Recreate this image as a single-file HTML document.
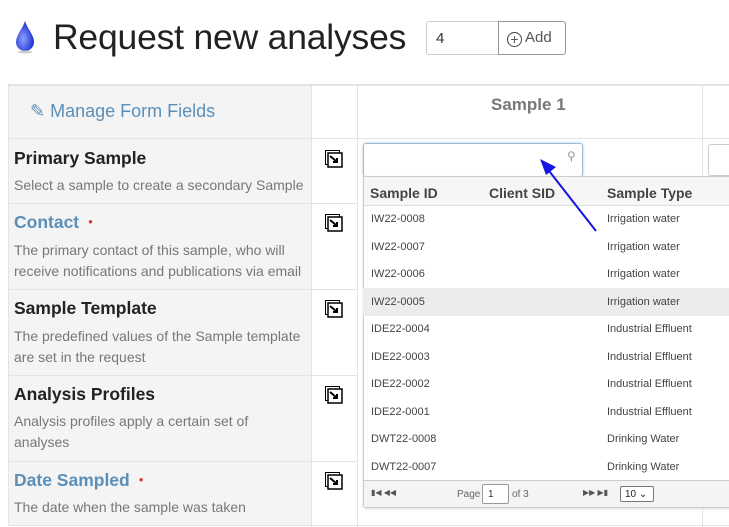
<!DOCTYPE html>
<html><head><meta charset="utf-8"><style>
*{box-sizing:border-box}
body{margin:0;width:729px;height:527px;overflow:hidden;background:#fff;font-family:"Liberation Sans",sans-serif;position:relative;color:#333}
.abs{position:absolute}
h1{position:absolute;left:53px;top:17px;margin:0;font-weight:normal;font-size:35.5px;color:#222;letter-spacing:-0.2px}
.cell{position:absolute;border-right:1px solid #e3e3e3;border-bottom:1px solid #e3e3e3}
.lab{background:#f4f4f4}
.t{position:absolute;left:14px;font-weight:bold;font-size:17.5px;color:#222}
.t.b{color:#5b8fb8}
.d{position:absolute;left:14px;font-size:14px;color:#777;line-height:21px}
.dot{color:#d33;font-size:8px;margin-left:9px;vertical-align:4px}
.ic{position:absolute;left:325px;width:18px;height:18px}
.r{position:absolute;left:363px;width:366px;height:27.5px;font-size:11px;color:#444}
.r span{position:absolute;top:8px}
</style></head><body>
<svg class="abs" style="left:12px;top:20px" width="26" height="34" viewBox="0 0 26 34"><defs><radialGradient id="g" cx="0.4" cy="0.6" r="0.6"><stop offset="0" stop-color="#8aa0ff"/><stop offset="1" stop-color="#1a2fd0"/></radialGradient></defs><path d="M13 1 C11 8 4 15 4 22 A9 9 0 0 0 22 22 C22 15 15 8 13 1Z" fill="url(#g)"/><ellipse cx="13" cy="32" rx="7" ry="1.5" fill="#ccc"/></svg>
<h1>Request new analyses</h1>
<div class="abs" style="left:426px;top:21px;width:140px;height:34px;border:1px solid #ccc;border-radius:3px"></div>
<div class="abs" style="left:436px;top:30px;font-size:15px;color:#333">4</div>
<div class="abs" style="left:498px;top:21px;width:68px;height:34px;border:1px solid #999;border-radius:0 3px 3px 0;font-size:15px;color:#555;padding:7px 0 0 8px"><span style="display:inline-block;width:15px;height:15px;border:1px solid #444;border-radius:50%;text-align:center;line-height:13px;font-size:14px;vertical-align:-2px;margin-right:3px">+</span>Add</div>

<div class="abs" style="left:8px;top:84px;width:721px;border-top:2px solid #e3e3e3"></div>
<div class="cell lab" style="left:8px;top:86px;width:304px;height:53px;border-left:1px solid #e3e3e3"></div>
<div class="abs" style="left:30px;top:101px;font-size:18px;color:#5b8fb8">✎ Manage Form Fields</div>
<div class="cell" style="left:312px;top:86px;width:46px;height:53px"></div>
<div class="cell" style="left:358px;top:86px;width:345px;height:53px"></div>
<div class="abs" style="left:491px;top:95px;font-size:17px;font-weight:bold;color:#777">Sample 1</div>

<div class="cell lab" style="left:8px;top:139px;width:304px;height:65px;border-left:1px solid #e3e3e3"></div>
<div class="cell lab" style="left:8px;top:204px;width:304px;height:86px;border-left:1px solid #e3e3e3"></div>
<div class="cell lab" style="left:8px;top:290px;width:304px;height:86px;border-left:1px solid #e3e3e3"></div>
<div class="cell lab" style="left:8px;top:376px;width:304px;height:86px;border-left:1px solid #e3e3e3"></div>
<div class="cell lab" style="left:8px;top:462px;width:304px;height:64px;border-left:1px solid #e3e3e3"></div>
<div class="abs" style="left:311px;top:139px;width:1px;height:388px;background:#e3e3e3"></div>
<div class="abs" style="left:357px;top:139px;width:1px;height:388px;background:#e3e3e3"></div>
<div class="abs" style="left:702px;top:86px;width:1px;height:441px;background:#e3e3e3"></div>
<div class="abs" style="left:312px;top:203px;width:46px;height:1px;background:#e3e3e3"></div>
<div class="abs" style="left:312px;top:289px;width:46px;height:1px;background:#e3e3e3"></div>
<div class="abs" style="left:312px;top:375px;width:46px;height:1px;background:#e3e3e3"></div>
<div class="abs" style="left:312px;top:461px;width:46px;height:1px;background:#e3e3e3"></div>
<div class="abs" style="left:312px;top:525px;width:417px;height:1px;background:#e3e3e3"></div>
<div class="abs" style="left:358px;top:138px;width:371px;height:1px;background:#e3e3e3"></div>

<div class="t" style="top:148px">Primary Sample</div>
<div class="d" style="top:175px">Select a sample to create a secondary Sample</div>
<div class="t b" style="top:212px">Contact<span class="dot">●</span></div>
<div class="d" style="top:240px">The primary contact of this sample, who will<br>receive notifications and publications via email</div>
<div class="t" style="top:298px">Sample Template</div>
<div class="d" style="top:326px">The predefined values of the Sample template<br>are set in the request</div>
<div class="t" style="top:384px">Analysis Profiles</div>
<div class="d" style="top:411px">Analysis profiles apply a certain set of<br>analyses</div>
<div class="t b" style="top:470px">Date Sampled<span class="dot">●</span></div>
<div class="d" style="top:497px">The date when the sample was taken</div>

<svg width="0" height="0" style="position:absolute"><defs><g id="ic"><rect x="0.5" y="0.5" width="14" height="14" fill="none" stroke="#000"/><rect x="3" y="3" width="14" height="14" fill="#fff" stroke="#000" stroke-width="1.5"/><path d="M5 6 L11 11 M8 12 L12 12 L12 8" stroke="#000" stroke-width="2" fill="none"/></g></defs></svg>
<svg class="ic" style="top:150px" viewBox="0 0 18 18"><use href="#ic"/></svg>
<svg class="ic" style="top:214px" viewBox="0 0 18 18"><use href="#ic"/></svg>
<svg class="ic" style="top:300px" viewBox="0 0 18 18"><use href="#ic"/></svg>
<svg class="ic" style="top:386px" viewBox="0 0 18 18"><use href="#ic"/></svg>
<svg class="ic" style="top:472px" viewBox="0 0 18 18"><use href="#ic"/></svg>

<div class="abs" style="left:363px;top:143px;width:220px;height:34px;border:1px solid #9dbad3;border-radius:3px;box-shadow:0 0 3px #b7cde0"></div>
<div class="abs" style="left:567px;top:149px;font-size:12px;color:#999">⚲</div>
<div class="abs" style="left:708px;top:144px;width:30px;height:32px;border:1px solid #ccc;border-radius:3px"></div>

<div class="abs" style="left:363px;top:176px;width:370px;height:332px;border:1px solid #ccc;border-radius:0 0 3px 3px;background:#fff;box-shadow:0 1px 2px #ddd"></div>
<div class="abs" style="left:364px;top:177px;width:366px;height:29px;background:#f6f6f6;border-bottom:1px solid #ddd;font-size:14px;font-weight:bold;color:#444">
<span class="abs" style="left:6px;top:8px">Sample ID</span><span class="abs" style="left:125px;top:8px">Client SID</span><span class="abs" style="left:243px;top:8px">Sample Type</span></div>
<div class="r" style="top:205px"><span style="left:8px">IW22-0008</span><span style="left:244px">Irrigation water</span></div>
<div class="r" style="top:233px"><span style="left:8px">IW22-0007</span><span style="left:244px">Irrigation water</span></div>
<div class="r" style="top:260px"><span style="left:8px">IW22-0006</span><span style="left:244px">Irrigation water</span></div>
<div class="r" style="top:288px;background:#ececec"><span style="left:8px">IW22-0005</span><span style="left:244px">Irrigation water</span></div>
<div class="r" style="top:315px"><span style="left:8px">IDE22-0004</span><span style="left:244px">Industrial Effluent</span></div>
<div class="r" style="top:343px"><span style="left:8px">IDE22-0003</span><span style="left:244px">Industrial Effluent</span></div>
<div class="r" style="top:370px"><span style="left:8px">IDE22-0002</span><span style="left:244px">Industrial Effluent</span></div>
<div class="r" style="top:398px"><span style="left:8px">IDE22-0001</span><span style="left:244px">Industrial Effluent</span></div>
<div class="r" style="top:425px"><span style="left:8px">DWT22-0008</span><span style="left:244px">Drinking Water</span></div>
<div class="r" style="top:453px"><span style="left:8px">DWT22-0007</span><span style="left:244px">Drinking Water</span></div>
<div class="abs" style="left:364px;top:480px;width:366px;height:27px;background:#f4f4f4;border-top:1px solid #ccc;font-size:10px;color:#666">
<span class="abs" style="left:7px;top:7px;font-size:8px;color:#555">▮◀ ◀◀</span>
<span class="abs" style="left:93px;top:8px">Page</span>
<span class="abs" style="left:118px;top:3px;width:27px;height:20px;border:1px solid #999;border-radius:2px;background:#fff;padding:4px 0 0 5px;color:#333">1</span>
<span class="abs" style="left:148px;top:8px">of 3</span>
<span class="abs" style="left:219px;top:7px;font-size:8px;color:#555">▶▶ ▶▮</span>
<span class="abs" style="left:256px;top:5px;width:34px;height:16px;border:1px solid #777;border-radius:2px;background:#fff;padding:2px 0 0 4px;color:#222">10 ⌄</span>
</div>

<svg class="abs" style="left:530px;top:155px" width="70" height="80"><path d="M66 76 L16 12" stroke="#1515e0" stroke-width="2"/><path d="M10 4 L26 12 L16 20 Z" fill="#1515e0"/></svg>
</body></html>
